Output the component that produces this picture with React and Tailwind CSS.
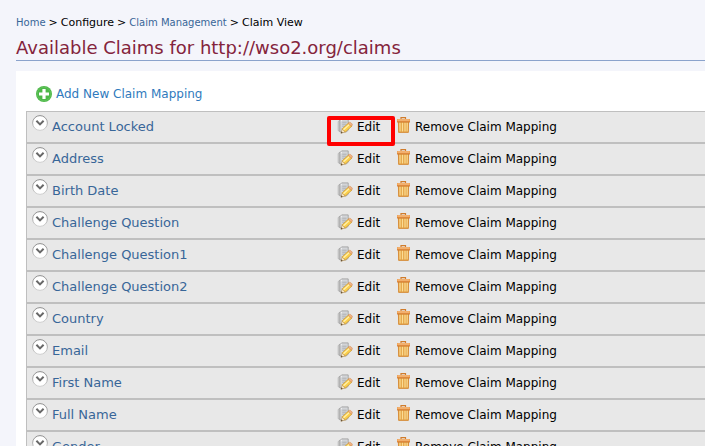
const claims = [
  "Account Locked",
  "Address",
  "Birth Date",
  "Challenge Question",
  "Challenge Question1",
  "Challenge Question2",
  "Country",
  "Email",
  "First Name",
  "Full Name",
  "Gender",
];

function AddIcon() {
  return (
    <svg className="w-4 h-4 shrink-0" viewBox="0 0 16 16" aria-hidden="true">
      <circle cx="8" cy="8" r="8" fill="#4db848" />
      <circle cx="8" cy="8" r="6.8" fill="none" stroke="#6cc866" strokeWidth="0.6" />
      <path d="M6.4 3h3.2v3.4H13v3.2H9.6V13H6.4V9.6H3V6.4h3.4z" fill="#fff" />
    </svg>
  );
}

function ArrowIcon() {
  return (
    <svg className="w-4 h-4" viewBox="0 0 16 16" aria-hidden="true">
      <defs>
        <linearGradient id="ring" x1="0" y1="0" x2="0" y2="1">
          <stop offset="0" stopColor="#8c8c8c" />
          <stop offset="1" stopColor="#cfcfcf" />
        </linearGradient>
      </defs>
      <circle cx="8" cy="8" r="7.4" fill="#fff" stroke="url(#ring)" />
      <path d="M4.4 5.8L8 9.4l3.6-3.6" fill="none" stroke="#686868" strokeWidth="2" />
    </svg>
  );
}

function EditIcon() {
  return (
    <svg className="w-4 h-4 shrink-0" viewBox="0 0 16 16" aria-hidden="true">
      <path d="M1.2 3.5L3 2v11.5l-1.8-.8z" fill="#dcdcdc" stroke="#a8a8a8" strokeWidth="0.7" />
      <path d="M4.6.9h6.6v11.4l-2 1.6H2.9V2.6z" fill="#d3d5d8" stroke="#999" strokeWidth="0.8" />
      <path d="M3.3 3.2L5 1.4v1.8z" fill="#f4f4f4" />
      <path d="M5.2 4.2h4.4M5.2 6.2h4.4M5.2 8.2h3" stroke="#a9abae" strokeWidth="0.9" />
      <path d="M5.2 10.8l-1.2 4.4 4.4-1.2z" fill="#f8e6c4" stroke="#b08a4e" strokeWidth="0.6" />
      <path d="M3.8 15.4l.6-2 1.4 1.4z" fill="#5b4a30" />
      <path d="M5.2 10.8l6.6-6 3.2 3.2-6.6 6z" fill="#fbd04d" stroke="#c8922f" strokeWidth="0.7" />
      <path d="M6.5 11.7l6.2-5.6" stroke="#fff2b4" strokeWidth="1.2" />
      <path d="M11.2 5.4l1.5-1.2c.9 0 2.6 1.5 2.8 2.7l-1.3 1.4z" fill="#eeb184" stroke="#cf8648" strokeWidth="0.5" />
    </svg>
  );
}

function TrashIcon() {
  return (
    <svg className="w-4 h-4 shrink-0" viewBox="0 0 16 16" aria-hidden="true">
      <path d="M5 2.2V.7h4.5v1.5" fill="none" stroke="#d07c2c" strokeWidth="1.2" />
      <path d="M2 5h11l-.4 10.4H2.4z" fill="#e5a548" />
      <path d="M4 5.6v9M6.5 5.6v9M9 5.6v9M11.2 5.6v9" stroke="#fbdc95" strokeWidth="1.2" />
      <path d="M2.4 5l.3 10.4h9.6l.3-10.4" fill="none" stroke="#d58a38" strokeWidth="0.9" />
      <path d="M1 2h13v3H1z" fill="#ec9b4c" />
      <path d="M1.5 3h12" stroke="#f8c590" strokeWidth="1" />
      <path d="M1 5h13" stroke="#c9702a" strokeWidth="0.8" />
    </svg>
  );
}

function ClaimRow({ name, highlighted }) {
  return (
    <li className="flex h-8 bg-[#e8e8e8] border border-[#bfbfbf] text-xs text-black">
      <div className="flex w-[310px] shrink-0 pl-[5px]">
        <button type="button" aria-label={`Expand ${name}`} className="w-4 h-4 mt-[3px] mr-1">
          <ArrowIcon />
        </button>
        <a href="#" className="pt-[6px] text-[13px] leading-[18px] text-[#386698]">
          {name}
        </a>
      </div>
      <div className="relative flex w-[59px] shrink-0 pt-[6px]">
        <a href="#" className="flex h-4 gap-1 leading-[18px]">
          <EditIcon />
          Edit
        </a>
        {highlighted && (
          <span className="absolute -left-[10px] top-[4px] z-10 w-[68px] h-[30px] border-4 border-[#ff0000] rounded-xs" />
        )}
      </div>
      <a href="#" className="flex shrink-0 gap-[3px] pt-[5px] leading-5">
        <TrashIcon />
        Remove Claim Mapping
      </a>
    </li>
  );
}

export default function App() {
  return (
    <div className="h-screen overflow-hidden bg-[#f4f5fb] pl-4 pt-[15px] font-['DejaVu_Sans',sans-serif]">
      {/* breadcrumb */}
      <nav className="flex items-baseline gap-[3px] text-[11px] leading-4 text-black whitespace-nowrap">
        <a href="#" className="text-[10px] text-[#386698]">Home</a>
        <span>&gt;</span>
        <span>Configure</span>
        <span>&gt;</span>
        <a href="#" className="text-[10px] text-[#386698]">Claim Management</a>
        <span>&gt;</span>
        <span>Claim View</span>
      </nav>

      <h1 className="pt-[6px] pb-px border-b border-[#8ba3cc] text-[18px] leading-[22px] text-[#84243c] whitespace-nowrap">
        Available Claims for http://wso2.org/claims
      </h1>

      <main className="mt-[10px] bg-white pl-[10px] pt-[14px]">
        <a href="#" className="inline-flex items-center gap-1 ml-[10px] text-xs leading-[18px] text-[#2f7abd]">
          <AddIcon />
          Add New Claim Mapping
        </a>
        {/* the list runs past the right edge of the panel */}
        <ul className="mt-[2px] -mr-px">
          {claims.map((name, i) => (
            <ClaimRow key={name} name={name} highlighted={i === 0} />
          ))}
        </ul>
      </main>
    </div>
  );
}
